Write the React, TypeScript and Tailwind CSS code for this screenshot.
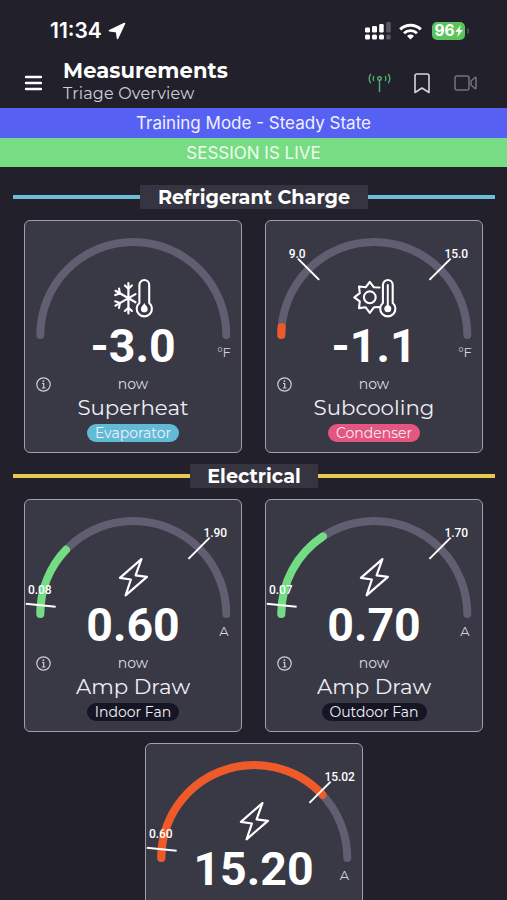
import React from "react";

const heading = "font-['Montserrat','Inter',sans-serif]";

type Limit = { text: string; angle: number };

type Reading = {
  value: string;
  unit: string;
  name?: string;
  tag?: string;
  tagClass?: string;
  icon: "cold" | "hot" | "bolt";
  fill?: number;
  color?: string;
  limits?: Limit[];
};

const refrigerant: Reading[] = [
  {
    value: "-3.0",
    unit: "°F",
    name: "Superheat",
    tag: "Evaporator",
    tagClass: "bg-[#62bbd6] w-[92px]",
    icon: "cold",
  },
  {
    value: "-1.1",
    unit: "°F",
    name: "Subcooling",
    tag: "Condenser",
    tagClass: "bg-[#e4557f] w-[92px]",
    icon: "hot",
    fill: 5,
    color: "#f05a28",
    limits: [
      { text: "9.0", angle: 45 },
      { text: "15.0", angle: 135 },
    ],
  },
];

const electrical: Reading[] = [
  {
    value: "0.60",
    unit: "A",
    name: "Amp Draw",
    tag: "Indoor Fan",
    tagClass: "bg-[#161523] w-[92px]",
    icon: "bolt",
    fill: 43.6,
    color: "#74dd84",
    limits: [
      { text: "0.08", angle: 5.4 },
      { text: "1.90", angle: 135 },
    ],
  },
  {
    value: "0.70",
    unit: "A",
    name: "Amp Draw",
    tag: "Outdoor Fan",
    tagClass: "bg-[#161523] w-[105px]",
    icon: "bolt",
    fill: 56.5,
    color: "#74dd84",
    limits: [
      { text: "0.07", angle: 5.4 },
      { text: "1.70", angle: 135 },
    ],
  },
  {
    value: "15.20",
    unit: "A",
    icon: "bolt",
    fill: 137.2,
    color: "#f05a28",
    limits: [
      { text: "0.60", angle: 5.4 },
      { text: "15.02", angle: 135 },
    ],
  },
];

// angle runs from 0 (left end of the arc) to 180 (right end)
const CX = 108.3;
const CY = 114;
const R = 93;

const point = (angle: number, r: number) => {
  const rad = (angle * Math.PI) / 180;
  return { x: CX - r * Math.cos(rad), y: CY - r * Math.sin(rad) };
};

const arc = (angle: number) => {
  const end = point(angle, R);
  return `M${CX - R} ${CY}A${R} ${R} 0 0 1 ${end.x} ${end.y}`;
};

const ReadingIcon = ({ icon }: { icon: Reading["icon"] }) => {
  if (icon === "bolt") {
    return (
      <path
        d="M116.4 59.1 94.9 77.8l11 1.700-5.300 15.800 21.300-18.500-11.300-1.500z"
        stroke="white"
        strokeWidth="2.2"
        strokeLinejoin="round"
        fill="none"
      />
    );
  }
  return (
    <g
      transform="translate(89 56.5)"
      stroke="white"
      strokeWidth="2.1"
      strokeLinecap="round"
      strokeLinejoin="round"
      fill="none"
    >
      {icon === "cold" ? (
        <>
          <path d="M14.4 5.500v30.400M1.500 13.300l20 11.500M1.500 28.100l20-11.500" strokeWidth="2.2" />
          <path d="M10.900 7.900l3.500 3.300 3.500-3.300M10.900 33.500l3.500-3.300 3.500 3.300M1.200 17.600l4.700-1.700-.9-4.900M1.200 23.800l4.700 1.700-.9 4.900" />
          <path d="M25.400 7.400a4.900 4.900 0 0 1 9.800 0v18.100a7.600 7.600 0 1 1-9.800 0z" />
          <path
            d="M30.300 25.500c.8 2.200 3.400 3.300 3.400 5.900a3.400 3.400 0 0 1-6.800 0c0-2.600 2.600-3.700 3.400-5.900z"
            fill="white"
            stroke="none"
          />
        </>
      ) : (
        <>
          <circle cx="14.800" cy="19.800" r="5.900" />
          <path d="M24.500 10 18.900 9.800 14.800 4.300 10.700 9.800 4 9l.8 6.700L-.7 19.800l5.500 4.100L4 30.600l6.700-.8 4.100 5.500 4.100-5.500 5.600-.2" />
          <path d="M27.900 7.400a4.900 4.900 0 0 1 9.800 0v18.100a7.600 7.600 0 1 1-9.800 0z" />
          <circle cx="32.800" cy="31.300" r="3.500" fill="white" stroke="none" />
          <path d="M32.800 7.500V30" strokeWidth="2" />
        </>
      )}
    </g>
  );
};

const Gauge = ({ reading }: { reading: Reading }) => (
  <svg
    className="[grid-area:1/1] block overflow-visible"
    width="216"
    height="120"
    viewBox="0 0 216 120"
  >
    <g fill="none" strokeWidth="8" strokeLinecap="round">
      <path d={arc(180)} stroke="#605e70" />
      {reading.fill && <path d={arc(reading.fill)} stroke={reading.color} />}
    </g>
    {reading.limits?.map((limit) => {
      const inner = point(limit.angle, 78);
      const outer = point(limit.angle, 108);
      const low = limit.angle < 30;
      const right = limit.angle > 90;
      return (
        <g key={limit.text}>
          <line
            x1={inner.x}
            y1={inner.y}
            x2={outer.x}
            y2={outer.y}
            stroke="white"
            strokeWidth="2"
          />
          <text
            x={low ? 3 : right ? 178.500 : 39.500}
            y={low ? 93.500 : 36.500}
            textAnchor={low || right ? "start" : "end"}
            className="fill-white font-['Roboto',sans-serif] text-[12px] font-medium tracking-[-0.1px]"
          >
            {limit.text}
          </text>
        </g>
      );
    })}
    <ReadingIcon icon={reading.icon} />
  </svg>
);

const Card = ({ reading }: { reading: Reading }) => (
  <div className="w-[218px] h-[233px] shrink-0 rounded-md border border-[#a09fab] bg-[#393845]">
    <div className="grid">
      <Gauge reading={reading} />
      <div className="[grid-area:1/1] pt-[100px] text-center font-['Roboto',sans-serif] text-[46.5px] leading-[50px] font-bold text-white">
        {reading.value}
      </div>
      <div
        className={`${heading} [grid-area:1/1] self-end justify-self-end w-6 mr-[5px] mb-[11px] text-center text-[13px] leading-4 text-[#d4d3dc]`}
      >
        {reading.unit}
      </div>
    </div>
    {reading.name && (
      <>
        <div className="flex items-center h-[22px] px-[11px] mt-0.5">
          <svg width="15" height="15" viewBox="0 0 15 15" fill="none" stroke="#cfced8">
            <circle cx="7.5" cy="7.5" r="6.7" strokeWidth="1.2" />
            <path d="M6 6.5h1.7V11M5.7 11h3.8" strokeWidth="1.2" />
            <circle cx="7.4" cy="4.2" r=".9" fill="#cfced8" stroke="none" />
          </svg>
          <span className={`${heading} flex-1 mr-[15px] text-center text-[14px] text-[#dddce5]`}>
            now
          </span>
        </div>
        <div
          className={`${heading} text-center text-[21.3px] leading-[25px] text-[#eeeef5]`}
        >
          {reading.name}
        </div>
        <div
          className={`${heading} mx-auto mt-1 h-[18px] rounded-full text-center text-[14px] leading-[19px] text-[#f0f0f6] ${reading.tagClass}`}
        >
          {reading.tag}
        </div>
      </>
    )}
  </div>
);

const SectionTitle = ({
  title,
  line,
  width,
}: {
  title: string;
  line: string;
  width: string;
}) => (
  <div className="flex items-center pl-[13px] pr-3">
    <div className={`h-1 flex-1 ${line}`} />
    <h2
      className={`${heading} ${width} h-6 bg-[#353440] text-center text-[19.2px] leading-6 font-bold text-white`}
    >
      {title}
    </h2>
    <div className={`h-1 flex-1 ${line}`} />
  </div>
);

const StatusBar = () => (
  <div className="flex items-center h-[62px] pl-[50px] pr-[38px]">
    <span className="font-['Inter',sans-serif] text-[21px] font-semibold text-white">
      11:34
    </span>
    <svg className="ml-1.5" width="18" height="18" viewBox="0 0 18 18" fill="white" stroke="white" strokeLinejoin="round">
      <path d="M16.500 1.500 1.500 8.800 8.700 9.700 9.500 16.500z" strokeWidth="1.6" />
    </svg>
    <svg className="ml-auto" width="27" height="18" viewBox="0 0 27 18" fill="white">
      <rect x="1" y="5.500" width="5" height="5" rx="1.2" />
      <rect x="8" y="4" width="5" height="6.5" rx="1.2" />
      <rect x="15.200" y="2" width="4.500" height="8.500" rx="1.2" />
      <rect x="22.200" y="0" width="4.500" height="10.500" rx="1.2" opacity=".25" />
      <rect x="1" y="12.500" width="5" height="5" rx="1.5" />
      <rect x="8" y="12.500" width="5" height="5" rx="1.5" />
      <rect x="15" y="12.500" width="5" height="5" rx="1.5" />
      <rect x="22.200" y="12.500" width="4.500" height="5" rx="1.5" opacity=".25" />
    </svg>
    <svg className="ml-2" width="23" height="17" viewBox="0 0 23 17" fill="none" stroke="white">
      <path d="M1.2 6.3a14.8 14.8 0 0 1 20.6 0" strokeWidth="3" />
      <path d="M5 10.2a9.3 9.3 0 0 1 13 0" strokeWidth="2.8" />
      <path d="M11.5 16.5 8 13a5 5 0 0 1 7 0z" fill="white" stroke="none" />
    </svg>
    <div className="ml-2.5 flex items-center justify-center w-[33px] h-[18px] rounded-[5px] bg-[#5cc45c]">
      <span className="font-['Inter',sans-serif] text-[15.5px] leading-[18px] font-bold text-white">
        96
      </span>
      <svg width="8" height="12" viewBox="0 0 8 12" fill="white">
        <path d="M5.8 0 .3 6.8h3L2.3 12 7.8 5H4.7z" />
      </svg>
    </div>
    <div className="ml-0.5 w-[2px] h-[6px] rounded-r-full bg-[#4d4c57]" />
  </div>
);

const Header = () => (
  <header className="flex items-center h-[46px] pb-1 pl-6 pr-[30px]">
    <svg width="18" height="16" viewBox="0 0 18 16" stroke="white" strokeWidth="2.4" strokeLinecap="round">
      <path d="M2 2h15M2 8h15M2 14h15" />
    </svg>
    <div className={`${heading} ml-[21px] -mt-0.5`}>
      <h1 className="text-[21px] leading-6 font-bold text-white tracking-[0.1px]">
        Measurements
      </h1>
      <p className="text-[16px] leading-[22px] text-[#cfced8] tracking-[0.2px]">
        Triage Overview
      </p>
    </div>
    <svg className="ml-auto" width="23" height="20" viewBox="0 0 23 20" fill="none" stroke="#4fae68" strokeWidth="1.4" strokeLinecap="round">
      <circle cx="11.5" cy="5.5" r="1.8" />
      <path d="M11.5 7.5V18.500M5.600 3.500a5 5 0 0 0 0 4M17.400 3.500a5 5 0 0 1 0 4M2.500 1.300a8 8 0 0 0 0 8.400M20.500 1.300a8 8 0 0 1 0 8.400" />
    </svg>
    <svg className="ml-[23px]" width="16" height="21" viewBox="0 0 16 21" fill="none" stroke="#d5d4dd" strokeWidth="1.6" strokeLinejoin="round">
      <path d="M1 3a2 2 0 0 1 2-2h10a2 2 0 0 1 2 2v16.500l-7-4.500-7 4.500z" />
    </svg>
    <svg className="ml-6" width="23" height="16" viewBox="0 0 23 16" fill="none" stroke="#74737e" strokeWidth="1.5" strokeLinejoin="round">
      <rect x="1" y="1" width="14" height="14" rx="2" />
      <path d="m17 6 4-3.500c.5-.4 1-.2 1 .4v10.200c0 .6-.5.8-1 .4L17 10z" />
    </svg>
  </header>
);

const App = () => {
  return (
    <div className="w-full h-[900px] overflow-hidden bg-[#22212b]">
      <StatusBar />
      <Header />
      <div className="h-[30px] bg-[#5661f3] text-center font-['Inter',sans-serif] text-[17px] leading-[31px] text-[#f0f0ff]">
        Training Mode - Steady State
      </div>
      <div className="h-[29px] bg-[#77dc84] text-center font-['Inter',sans-serif] text-[17px] leading-[30px] text-[#effcef]">
        SESSION IS LIVE
      </div>
      <main className="pt-[18px]">
        <SectionTitle title="Refrigerant Charge" line="bg-[#6dbdd8]" width="w-[228px]" />
        <div className="flex flex-wrap justify-center gap-x-[23px] gap-y-[11px] my-[11px]">
          {refrigerant.map((reading) => (
            <Card key={reading.value} reading={reading} />
          ))}
        </div>
        <SectionTitle title="Electrical" line="bg-[#e9c852]" width="w-[128px]" />
        <div className="flex flex-wrap justify-center gap-x-[23px] gap-y-[11px] mt-[11px]">
          {electrical.map((reading) => (
            <Card key={reading.value} reading={reading} />
          ))}
        </div>
      </main>
    </div>
  );
};

export default App;
